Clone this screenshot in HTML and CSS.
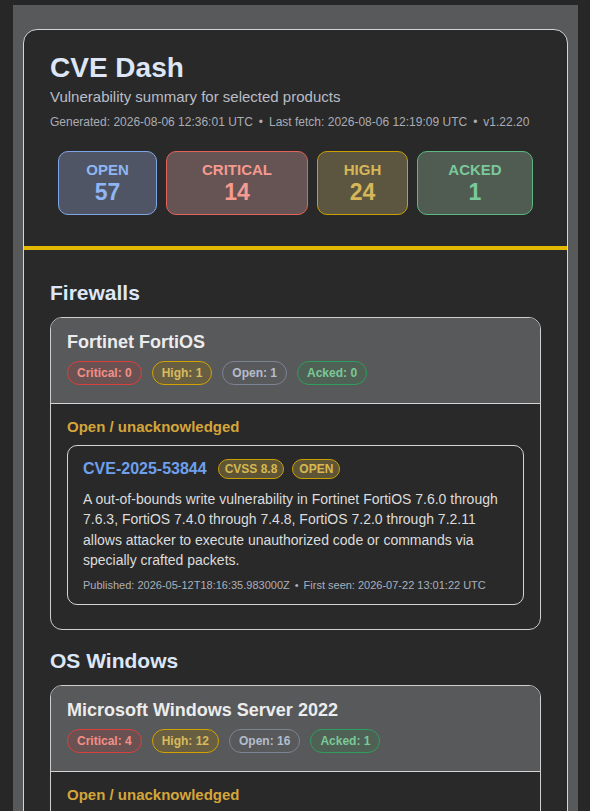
FILE: index.html
```html
<!DOCTYPE html>
<html lang="en">
<head>
    <meta charset="UTF-8">
    <meta name="viewport" content="width=device-width, initial-scale=1.0">
    <title>CVE Dash</title>
    <link rel="stylesheet" href="styles.css">
</head>
<body>
    <div class="wrap">
        <div class="card">
            <!-- Summary header -->
            <header class="top">
                <h1>CVE Dash</h1>
                <div class="subtitle">Vulnerability summary for selected products</div>
                <div class="meta">Generated: 2026-08-06 12:36:01 UTC<span class="dot">&bull;</span>Last fetch: 2026-08-06 12:19:09 UTC<span class="dot">&bull;</span>v1.22.20</div>

                <div class="stats">
                    <div class="stat stat-open"><div class="stat-label">OPEN</div><div class="stat-num">57</div></div>
                    <div class="stat stat-critical"><div class="stat-label">CRITICAL</div><div class="stat-num">14</div></div>
                    <div class="stat stat-high"><div class="stat-label">HIGH</div><div class="stat-num">24</div></div>
                    <div class="stat stat-acked"><div class="stat-label">ACKED</div><div class="stat-num">1</div></div>
                </div>
            </header>

            <main class="content">
                <h2>Firewalls</h2>
                <div class="product">
                    <div class="product-head">
                        <div class="product-name">Fortinet FortiOS</div>
                        <div class="badges">
                            <span class="badge badge-critical">Critical: 0</span>
                            <span class="badge badge-high">High: 1</span>
                            <span class="badge badge-open">Open: 1</span>
                            <span class="badge badge-acked">Acked: 0</span>
                        </div>
                    </div>
                    <div class="product-body">
                        <div class="group-title">Open / unacknowledged</div>
                        <div class="cve">
                            <div class="cve-head">
                                <a class="cve-id" href="#">CVE-2025-53844</a>
                                <span class="tag">CVSS 8.8</span>
                                <span class="tag">OPEN</span>
                            </div>
                            <p class="cve-desc">A out-of-bounds write vulnerability in Fortinet FortiOS 7.6.0 through 7.6.3, FortiOS 7.4.0 through 7.4.8, FortiOS 7.2.0 through 7.2.11 allows attacker to execute unauthorized code or commands via specially crafted packets.</p>
                            <div class="cve-meta">Published: 2026-05-12T18:16:35.983000Z<span class="dot">&bull;</span>First seen: 2026-07-22 13:01:22 UTC</div>
                        </div>
                    </div>
                </div>

                <h2>OS Windows</h2>
                <div class="product">
                    <div class="product-head">
                        <div class="product-name">Microsoft Windows Server 2022</div>
                        <div class="badges">
                            <span class="badge badge-critical">Critical: 4</span>
                            <span class="badge badge-high">High: 12</span>
                            <span class="badge badge-open">Open: 16</span>
                            <span class="badge badge-acked">Acked: 1</span>
                        </div>
                    </div>
                    <div class="product-body">
                        <div class="group-title">Open / unacknowledged</div>
                        <div class="cve">
                            <div class="cve-head">
                                <a class="cve-id" href="#">CVE-2025-29809</a>
                                <span class="tag">CVSS 7.1</span>
                                <span class="tag">OPEN</span>
                            </div>
                            <p class="cve-desc">Insecure protected resource in Windows Kerberos allows an authorized attacker to bypass a security feature locally.</p>
                        </div>
                    </div>
                </div>
            </main>
        </div>
    </div>
</body>
</html>
```

FILE: styles.css
```css
body {
    font-family: 'Liberation Sans', Arial, sans-serif;
    background: #272727;
    color: #ddd;
    margin: 0;
    padding: 5px 12px 0 13px;
}
.wrap {
    background: #58595b;
    padding: 24px 10px 0;
}
.card {
    background: #292929;
    border: 1px solid #d4d4d4;
    border-radius: 14px;
    overflow: hidden;
}

/* Header */
.top {
    padding: 21px 26px 31px;
    border-bottom: 4px solid #e2b800;
}
h1 {
    margin: 0;
    font-size: 28px;
    line-height: 1.2;
    color: #dde6f7;
}
.subtitle {
    margin-top: 2px;
    font-size: 15px;
    line-height: 20px;
    color: #b9bdc6;
}
.meta {
    margin-top: 7px;
    font-size: 12px;
    line-height: 16px;
    color: #a9adb5;
}
.dot {
    margin: 0 6px;
}
.stats {
    display: grid;
    grid-template-columns: 99fr 142fr 91fr 116fr;
    gap: 9px;
    margin: 21px 8px 0;
}
.stat {
    border: 1px solid;
    border-radius: 10px;
    padding: 9px 0;
    text-align: center;
    font-weight: bold;
}
.stat-label {
    font-size: 15px;
    line-height: 18px;
}
.stat-num {
    font-size: 23px;
    line-height: 26px;
}
.stat-open {
    background: #4f5564;
    border-color: #7ea6e6;
    color: #8fb5f2;
}
.stat-critical {
    background: #665353;
    border-color: #e2625c;
    color: #f49a90;
}
.stat-high {
    background: #5c5640;
    border-color: #c9a000;
    color: #d6b658;
}
.stat-acked {
    background: #505c52;
    border-color: #5cb880;
    color: #7ac99a;
}

/* Sections */
.content {
    padding: 30px 26px 40px;
}
h2 {
    margin: 0 0 12px;
    font-size: 21px;
    line-height: 25px;
    color: #dde6f7;
}
.product + h2 {
    margin-top: 18px;
}
.product {
    border: 1px solid #cfcfcf;
    border-radius: 12px;
    overflow: hidden;
}
.product-head {
    background: #58595b;
    padding: 13px 16px 18px;
    border-bottom: 1px solid #d4d4d4;
}
.product-name {
    font-size: 18px;
    line-height: 22px;
    font-weight: bold;
    color: #ececec;
}
.badges {
    display: flex;
    gap: 10px;
    margin-top: 8px;
}
.badge {
    border: 1px solid;
    border-radius: 12px;
    padding: 4px 9px;
    font-size: 12px;
    line-height: 14px;
    font-weight: bold;
}
.badge-critical {
    background: #6a5152;
    border-color: #d9403e;
    color: #f28f88;
}
.badge-high {
    background: #685f43;
    border-color: #d2a200;
    color: #d9ba5c;
}
.badge-open {
    border-color: #7c8494;
    color: #b5bdcc;
}
.badge-acked {
    background: #4f6154;
    border-color: #2f9e5c;
    color: #7cc898;
}
.product-body {
    padding: 14px 16px 24px;
}
.group-title {
    font-size: 15px;
    line-height: 18px;
    font-weight: bold;
    color: #d6a53a;
}
.cve {
    margin-top: 9px;
    border: 1px solid #d4d4d4;
    border-radius: 10px;
    padding: 13px 15px 12px;
}
.cve-head {
    display: flex;
    align-items: center;
    gap: 8px;
}
.cve-id {
    font-size: 16px;
    line-height: 20px;
    font-weight: bold;
    color: #6ea0ee;
    text-decoration: none;
    margin-right: 3px;
}
.tag {
    background: #5d5536;
    border: 1px solid #c9a000;
    border-radius: 10px;
    padding: 2px 6px;
    font-size: 12px;
    line-height: 14px;
    font-weight: bold;
    color: #d8b850;
}
.cve-desc {
    margin: 10px 0 0;
    font-size: 14px;
    line-height: 20.5px;
    color: #dcdcdc;
}
.cve-meta {
    margin-top: 7px;
    font-size: 11px;
    line-height: 14px;
    color: #a9b0bc;
}
.cve-meta .dot {
    margin: 0 5px;
}
```
